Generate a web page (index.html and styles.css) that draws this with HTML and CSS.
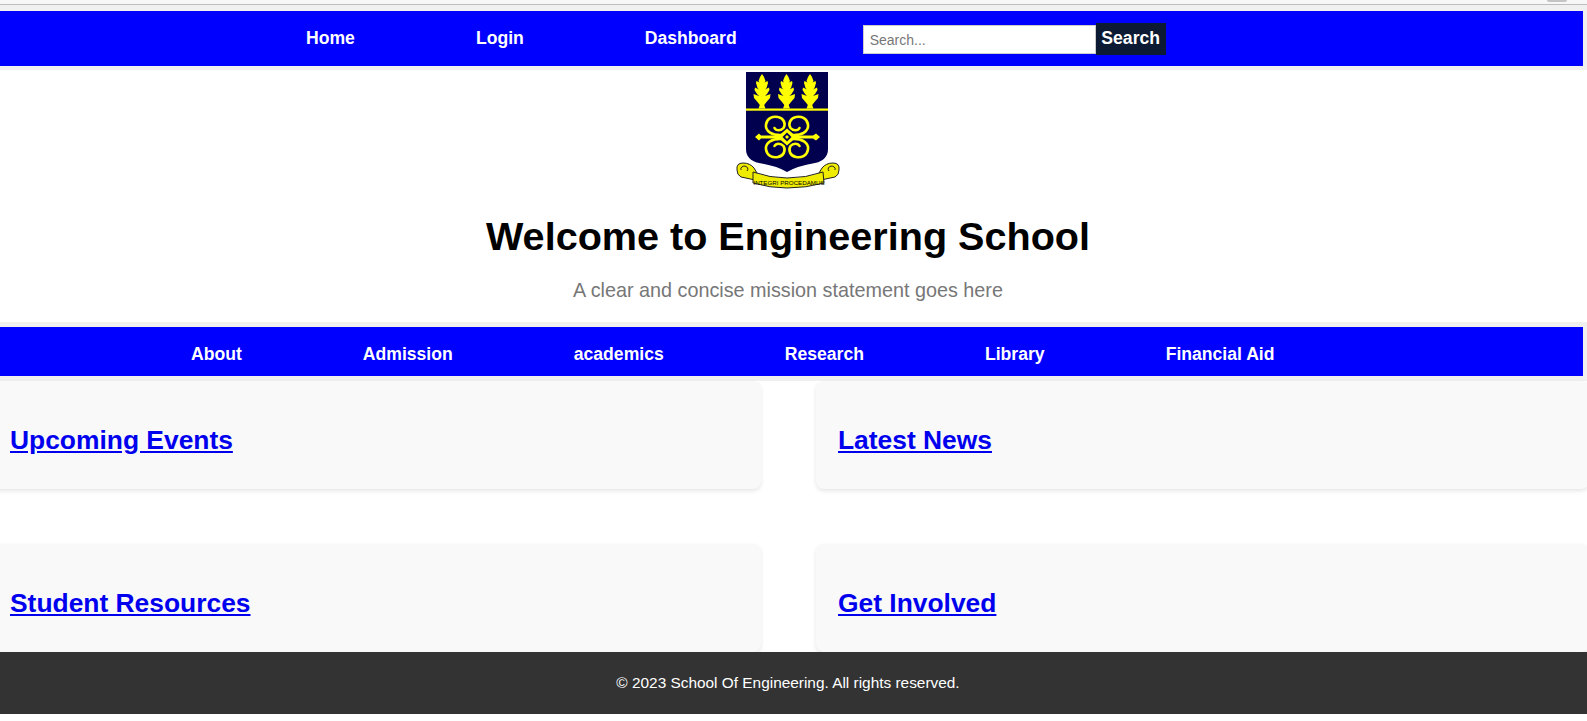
FILE: index.html
```html
<!DOCTYPE html>
<html lang="en">
<head>
    <meta charset="UTF-8">
    <meta name="viewport" content="width=device-width, initial-scale=1.0">
    <title>School Of Engineering</title>
    <link rel="stylesheet" href="styles.css">
</head>
<body>
    <div class="top-strip"><span class="top-strip-mark"></span></div>

    <nav class="top-nav">
        <a href="#">Home</a>
        <a href="#">Login</a>
        <a href="#">Dashboard</a>
        <form class="search-form">
            <input type="text" placeholder="Search...">
            <button type="button">Search</button>
        </form>
    </nav>

    <header class="hero">
        <svg class="crest" viewBox="736 70 104 120" width="104" height="120" role="img" aria-label="University crest">
            <defs>
                <path id="frond" d="M0 0 L2 3 L3.5 7 L2.5 8.5 L5.5 7 L6 9 L4.5 14 L3 15.5 L7 13.5 L7.5 16 L5 20 L3 22 L8.5 20 L8 24 L4.5 28 L2.2 31 L3.5 34.5 L-3.5 34.5 L-2.2 31 L-4.5 28 L-8 24 L-8.5 20 L-3 22 L-5 20 L-7.5 16 L-7 13.5 L-3 15.5 L-4.5 14 L-6 9 L-5.5 7 L-2.5 8.5 L-3.5 7 L-2 3 Z"/>
                <path id="curl" d="M783 135 C772 136 765 131 766 124.5 C767 118 773 116 778 117 C784 118 786 124 783.5 128 C781 131 776 131 774.5 128"/>
            </defs>
            <path class="crest-shield" d="M746 72 H828 V149 Q828 160 815 163 Q797 166 787 172 Q777 166 759 163 Q746 160 746 149 Z"/>
            <use href="#frond" class="crest-gold" x="762" y="74"/>
            <use href="#frond" class="crest-gold" x="786.5" y="74"/>
            <use href="#frond" class="crest-gold" x="810" y="74"/>
            <rect class="crest-gold" x="746" y="108.5" width="82" height="2.2"/>
            <g class="crest-line">
                <use href="#curl"/>
                <use href="#curl" transform="matrix(-1 0 0 1 1574 0)"/>
                <use href="#curl" transform="matrix(1 0 0 -1 0 274)"/>
                <use href="#curl" transform="matrix(-1 0 0 -1 1574 274)"/>
            </g>
            <path class="crest-gold" d="M755 137 L759 133.5 L761 135.5 H779 L787 128.5 L795 135.5 H813 L816 133.5 L820 137 L816 140.5 L813 138.5 H795 L787 145.5 L779 138.5 H761 L759 140.5 Z"/>
            <path class="crest-shield" d="M787 132.5 L791.5 137 L787 141.5 L782.5 137 Z"/>
            <path class="crest-gold" d="M787 135 L789 137 L787 139 L785 137 Z"/>
            <path class="crest-ribbon" d="M737 170 Q736 163 743 163 Q750 163 754 168 L757 173 L755 180 Q746 178 741 177 Q737 175 737 170 Z"/>
            <path class="crest-ribbon" d="M839 170 Q840 163 833 163 Q826 163 822 168 L819 173 L821 180 Q830 178 835 177 Q839 175 839 170 Z"/>
            <path class="crest-ribbon" d="M753 172 Q770 178 787 178 Q806 178 823 172 L824 183 Q806 188 787 188 Q770 188 753 183 Z"/>
            <path class="crest-hook" d="M741 170 a3.5 3 0 1 1 6 1 M835 170 a3.5 3 0 1 0 -6 1"/>
            <text class="crest-motto" x="789" y="184.5" text-anchor="middle">INTEGRI PROCEDAMUS</text>
        </svg>
        <h1>Welcome to Engineering School</h1>
        <p>A clear and concise mission statement goes here</p>
    </header>

    <nav class="main-nav">
        <a href="#">About</a>
        <a href="#">Admission</a>
        <a href="#">academics</a>
        <a href="#">Research</a>
        <a href="#">Library</a>
        <a href="#">Financial Aid</a>
    </nav>

    <main class="cards">
        <section class="card"><h2><a href="#">Upcoming Events</a></h2></section>
        <section class="card"><h2><a href="#">Latest News</a></h2></section>
        <section class="card"><h2><a href="#">Student Resources</a></h2></section>
        <section class="card"><h2><a href="#">Get Involved</a></h2></section>
    </main>

    <footer class="site-footer">&copy; 2023 School Of Engineering. All rights reserved.</footer>
</body>
</html>
```

FILE: styles.css
```css
html, body {
    height: 100%;
    overflow: hidden;
}
body {
    margin: 0;
    font-family: "Liberation Sans", Arial, sans-serif;
    background-color: #fff;
}
.top-strip {
    height: 4px;
    background-color: #f7f7f7;
    border-bottom: 1px solid #bdbdbd;
    display: flex;
    justify-content: flex-end;
}
.top-strip-mark {
    width: 20px;
    height: 2px;
    margin-right: 20px;
    background-color: #c4c4c4;
    border-radius: 0 0 8px 8px;
}
.top-nav, .main-nav {
    display: flex;
    align-items: center;
    gap: 121px;
    background-color: #00f;
    border-right: 4px solid #f0f0f0;
    font-size: 17.6px;
}
.top-nav a, .main-nav a {
    color: #fff;
    font-weight: bold;
    text-decoration: none;
}
.top-nav {
    height: 55px;
    padding-left: 306px;
    border-top: 6px solid #f0f0f0;
    border-bottom: 4px solid #f0f0f0;
}
.search-form {
    display: flex;
    align-items: center;
    margin-left: 5px;
}
.search-form input {
    box-sizing: border-box;
    width: 233px;
    height: 29px;
    margin-top: 2px;
    padding: 0 6px;
    border: 1px solid #ccc;
    font-family: inherit;
    font-size: 14px;
}
.search-form input::placeholder {
    color: #777;
}
.search-form button {
    box-sizing: border-box;
    width: 70px;
    height: 32px;
    padding: 0;
    border: none;
    background-color: #0c1b33;
    color: #fff;
    font-family: inherit;
    font-size: 17.6px;
    font-weight: bold;
}
.hero {
    height: 252px;
    padding-right: 11px;
    text-align: center;
}
.crest {
    display: block;
    margin: 0 auto;
}
.crest-shield {
    fill: #00004f;
}
.crest-gold {
    fill: #ff0;
}
.crest-line {
    fill: none;
    stroke: #ff0;
    stroke-width: 2.6;
    stroke-linecap: round;
}
.crest-ribbon {
    fill: #f0ec00;
    stroke: #222;
    stroke-width: 1;
}
.crest-hook {
    fill: none;
    stroke: #222;
    stroke-width: 1;
}
.crest-motto {
    font-size: 6.2px;
    fill: #000;
}
.hero h1 {
    margin: 23px 0 0;
    font-size: 39.6px;
    line-height: 46px;
    color: #000;
}
.hero p {
    margin: 20px 0 0;
    font-size: 19.8px;
    line-height: 23px;
    color: #777;
}
.main-nav {
    height: 44px;
    padding-top: 5px;
    padding-left: 191px;
    border-top: 5px solid #f0f0f0;
    border-bottom: 5px solid #f0f0f0;
}
.cards {
    display: grid;
    grid-template-columns: 773px 773px;
    grid-auto-rows: 108px;
    gap: 55px;
    margin-left: -12px;
}
.card {
    display: flex;
    align-items: center;
    padding: 10px 22px 0;
    background-color: #f9f9f9;
    border-radius: 8px;
    box-shadow: 0 2px 4px rgba(0, 0, 0, 0.1);
}
.card h2 {
    margin: 0;
    font-size: 26.4px;
}
.card a {
    color: #00e;
}
.site-footer {
    position: fixed;
    left: 0;
    right: 0;
    top: 652px;
    height: 62px;
    line-height: 62px;
    padding-right: 11px;
    text-align: center;
    background-color: #333;
    color: #fff;
    font-size: 15.4px;
}
```
